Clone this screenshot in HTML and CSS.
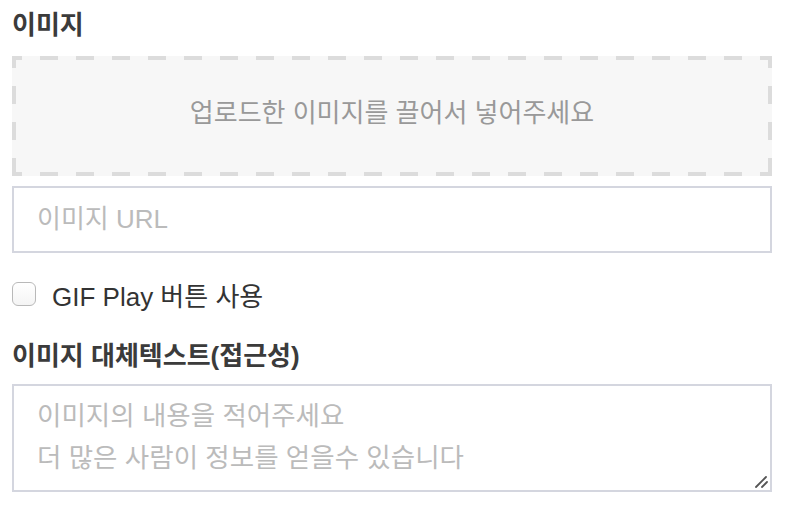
FILE: index.html
```html
<!doctype html>
<html lang="ko">
  <head>
    <meta charset="UTF-8" />
    <meta name="viewport" content="width=device-width, initial-scale=1.0" />
    <title>이미지 설정</title>
    <link rel="stylesheet" href="styles.css">
  </head>
  <body>
    <div class="panel">
      <h2 class="field-label">이미지</h2>
      <div class="dropzone">업로드한 이미지를 끌어서 넣어주세요</div>

      <input type="text" class="text-input" placeholder="이미지 URL" />

      <label class="check-row">
        <input type="checkbox" class="check" />
        <span>GIF Play 버튼 사용</span>
      </label>

      <h2 class="field-label alt-label">이미지 대체텍스트(접근성)</h2>
      <div class="area-wrap">
        <textarea
          class="text-area"
          placeholder="이미지의 내용을 적어주세요&#10;더 많은 사람이 정보를 얻을수 있습니다"
        ></textarea>
        <svg class="grip" width="14" height="14" viewBox="0 0 14 14">
          <path d="M2 13 L12 3 M8 13 L13 8" stroke="#555" stroke-width="1.8" stroke-linecap="round" fill="none" />
        </svg>
      </div>
    </div>
  </body>
</html>
```

FILE: styles.css
```css
:root {
  --text-color: #333333;
  --label-color: #3b3b3b;
  --muted-color: #999999;
  --placeholder-color: #bbbbbb;
  --field-border: #d4d6df;
  --dash-color: #dcdcdc;
  --drop-background: #f7f7f7;
}

body {
  font-family: "Liberation Sans", "Noto Sans CJK KR", sans-serif;
  margin: 0;
  padding: 0 16px 0 12px;
  background-color: #ffffff;
  color: var(--text-color);
}

.panel {
  display: flex;
  flex-direction: column;
}

.field-label {
  margin: 0;
  font-size: 26px;
  font-weight: bold;
  line-height: 50px;
  color: var(--label-color);
}

.alt-label {
  margin-top: 25px;
}

/* dashed box drawn with gradients so the dash rhythm matches */
.dropzone {
  box-sizing: border-box;
  height: 120px;
  margin-top: 6px;
  padding-bottom: 12px;
  display: flex;
  align-items: center;
  justify-content: center;
  font-size: 26px;
  color: var(--muted-color);
  background-color: var(--drop-background);
  background-image:
    repeating-linear-gradient(90deg, var(--dash-color) 0 10px, transparent 10px 28px, var(--dash-color) 28px 36px),
    repeating-linear-gradient(90deg, var(--dash-color) 0 10px, transparent 10px 28px, var(--dash-color) 28px 36px),
    repeating-linear-gradient(180deg, var(--dash-color) 0 12px, transparent 12px 30px, var(--dash-color) 30px 36px),
    repeating-linear-gradient(180deg, var(--dash-color) 0 12px, transparent 12px 30px, var(--dash-color) 30px 36px);
  background-size: 100% 4px, 100% 4px, 4px 100%, 4px 100%;
  background-position: top left, bottom left, top left, top right;
  background-repeat: no-repeat;
}

.text-input,
.text-area {
  box-sizing: border-box;
  width: 100%;
  margin: 0;
  border: 2px solid var(--field-border);
  border-radius: 0;
  font-family: inherit;
  font-size: 26px;
  color: var(--text-color);
  background-color: #ffffff;
  outline: none;
}

.text-input {
  height: 67px;
  margin-top: 10px;
  padding: 0 23px;
}

.area-wrap {
  position: relative;
  margin-top: 3px;
}

.text-area {
  display: block;
  height: 108px;
  padding: 9px 23px 11px;
  font-size: 26.5px;
  line-height: 42px;
  resize: none;
}

.grip {
  position: absolute;
  right: 4px;
  bottom: 4px;
}

.text-input::placeholder,
.text-area::placeholder {
  color: var(--placeholder-color);
}

.check-row {
  display: flex;
  align-items: center;
  gap: 16px;
  height: 24px;
  margin-top: 29px;
  font-size: 26px;
  color: var(--text-color);
}

.check {
  appearance: none;
  width: 24px;
  height: 24px;
  margin: 0;
  border: 1px solid #b9b9b9;
  border-radius: 6px;
  background: linear-gradient(#ffffff, #f4f4f4);
}
```
